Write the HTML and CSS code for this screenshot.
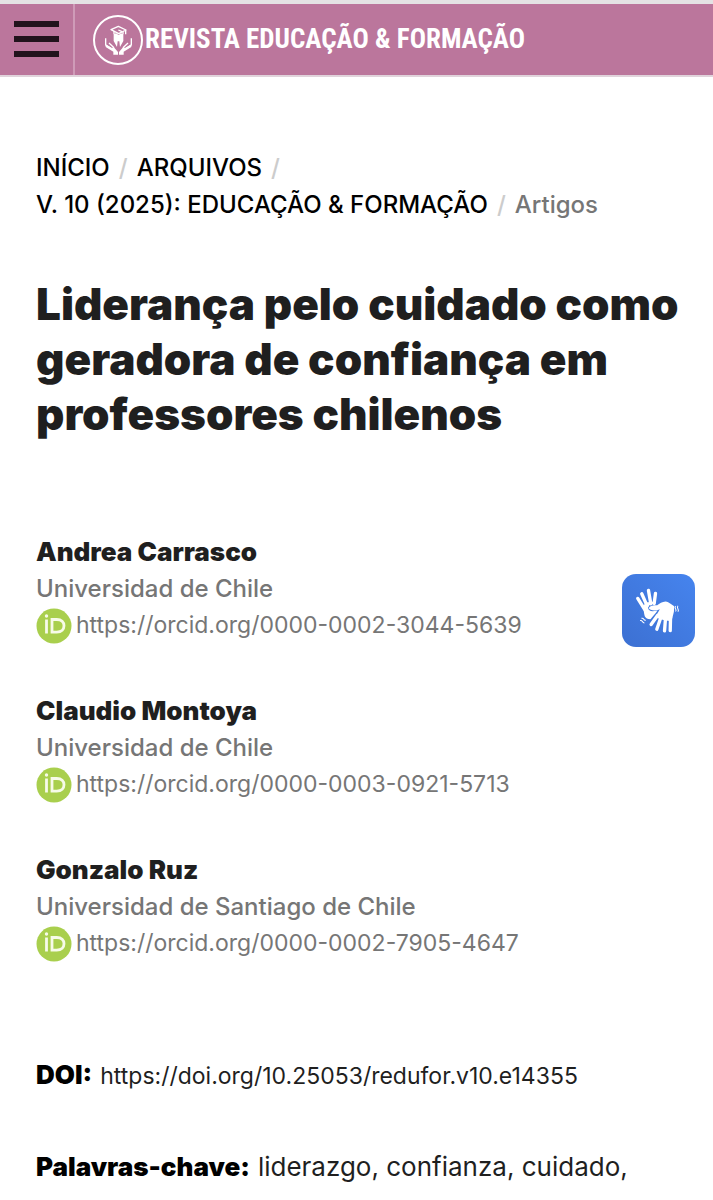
FILE: index.html
```html
<!DOCTYPE html>
<html lang="pt-BR">
<head>
  <meta charset="utf-8">
  <meta name="viewport" content="width=device-width, initial-scale=1">
  <title>Liderança pelo cuidado como geradora de confiança em professores chilenos</title>
  <link rel="stylesheet" href="styles.css">
</head>
<body>

<svg class="defs" width="0" height="0" aria-hidden="true">
  <symbol id="orcid" viewBox="0 0 36 36">
    <circle cx="18" cy="18" r="17.5" fill="#a9cf4d"/>
    <g fill="none" stroke="#f7fbe9" stroke-width="2.8">
      <path d="M10.500 11.500v14"/>
      <path d="M16 11.500h4.800c4.800 0 7.200 2.900 7.200 6.300s-2.400 6.300-7.200 6.300h-4.800z"/>
    </g>
    <circle cx="10.500" cy="8" r="1.700" fill="#f7fbe9"/>
  </symbol>
</svg>

<header class="site-header">
  <button class="menu-btn" aria-label="Menu">
    <span></span>
    <span></span>
    <span></span>
  </button>
  <a class="logo" href="#">
    <svg class="logo-mark" viewBox="0 0 150 154" aria-hidden="true">
      <circle cx="75" cy="77" r="72" fill="none" stroke="#fff" stroke-width="6"/>
      <g fill="none" stroke="#fff" stroke-width="4" stroke-linejoin="round">
        <path d="M54 46l22-10 23 11-22 11z"/>
        <path d="M98 48v12M76 47l11 5M63 50v10M90 52v8"/>
        <path d="M38 72v20l19 12M115 72v20l-19 12"/>
        <path d="M48 86l15 14M105 86l-15 14"/>
      </g>
      <g fill="#fff">
        <path d="M62 60l7-3 8 5 7-5 7 3v20l-10 18-2-17h-5l-2 17-10-18z"/>
        <path d="M38 90l19 11 5-3 13 15v8H61v-9L38 98z"/>
        <path d="M115 90l-19 11-5-3-13 15v8h14v-9l23-14z"/>
      </g>
    </svg>
    <span class="logo-text">REVISTA EDUCAÇÃO &amp; FORMAÇÃO</span>
  </a>
</header>

<main class="article">
  <nav class="breadcrumbs" aria-label="Você está aqui">
    <ol>
      <li><a href="#">INÍCIO</a></li>
      <li><a href="#">ARQUIVOS</a></li>
      <li><a href="#">V. 10 (2025): EDUCAÇÃO &amp; FORMAÇÃO</a></li>
      <li class="current">Artigos</li>
    </ol>
  </nav>

  <h1>Liderança pelo cuidado como geradora de confiança em professores chilenos</h1>

  <ul class="authors">
    <li>
      <strong>Andrea Carrasco</strong>
      <span class="affiliation">Universidad de Chile</span>
      <a class="orcid" href="#"><svg aria-hidden="true"><use href="#orcid"/></svg>https://orcid.org/0000-0002-3044-5639</a>
    </li>
    <li>
      <strong>Claudio Montoya</strong>
      <span class="affiliation">Universidad de Chile</span>
      <a class="orcid" href="#"><svg aria-hidden="true"><use href="#orcid"/></svg>https://orcid.org/0000-0003-0921-5713</a>
    </li>
    <li>
      <strong>Gonzalo Ruz</strong>
      <span class="affiliation">Universidad de Santiago de Chile</span>
      <a class="orcid" href="#"><svg aria-hidden="true"><use href="#orcid"/></svg>https://orcid.org/0000-0002-7905-4647</a>
    </li>
  </ul>

  <section class="item doi">
    <h2>DOI:</h2>
    <a href="#">https://doi.org/10.25053/redufor.v10.e14355</a>
  </section>

  <section class="item keywords">
    <h2>Palavras-chave:</h2>
    <span>liderazgo, confianza, cuidado,</span>
  </section>
</main>

<button class="libras-btn" aria-label="Conteúdo acessível em Libras">
  <svg viewBox="36 42 218 218" aria-hidden="true">
    <g fill="none" stroke="#fff" stroke-width="10" stroke-linecap="round" stroke-linejoin="round">
      <path d="M83 115l20 32M95 101l16 36M115 91l7 40M136 100l-4 30"/>
      <path d="M142 166l-19 27M152 172l-12 35M166 174l-3 38M181 170l-1 41"/>
    </g>
    <path fill="#fff" d="M98 143l8-16 30-3 1 6c-13 0-22 5-23 12 0 8 6 11 14 11l14-2c-3 5-7 10-11 14l-10 12c-9 0-14-3-17-9-3-8-2-16-6-25z"/>
    <path fill="#fff" d="M119 140c5-5 13-5 22-5 7-5 15-10 25-11 6 0 10 4 15 7l11 7-1 17-5 20-5 7-16-1-13-4-17-6 14-24c-9 4-19 5-27 2-6-2-7-6-3-9z"/>
    <path d="M196 138q-3 4 0 8t0 8M203 137q-3 5 0 9t0 9M90 181q5-1 7 3t6 4M94 174q5-1 7 3t6 3" fill="none" stroke="#fff" stroke-width="3"/>
  </svg>
</button>

</body>
</html>
```
FILE: styles.css
```css
* {
  box-sizing: border-box;
}
body {
  margin: 0;
  font-family: Inter, sans-serif;
  font-size: 24px;
  line-height: 37px;
  color: #1f1f1f;
  background: #fff;
}
a {
  color: inherit;
  text-decoration: none;
}
button {
  border: none;
  cursor: pointer;
}
.defs {
  position: absolute;
}

/* Header */
.site-header {
  display: flex;
  height: 77px;
  background: #bb769c;
  border-top: 4px solid #e4e2e4;
  border-bottom: 2px solid #e0d3db;
}
.menu-btn {
  display: flex;
  flex-direction: column;
  justify-content: center;
  gap: 9px;
  width: 75px;
  padding: 0 14px 2px;
  background: none;
  border-right: 2px solid #cf9bb8;
}
.menu-btn span {
  height: 6px;
  background: #21131c;
}
.logo {
  display: flex;
  align-items: center;
  padding-left: 18px;
  color: #fff;
}
.logo-mark {
  width: 50px;
  height: 52px;
}
.logo-text {
  padding-left: 2px;
  font-family: "Roboto Condensed", Roboto, sans-serif;
  font-size: 27px;
  font-weight: bold;
  white-space: nowrap;
}

/* Article */
.article {
  padding: 72px 32px 0 36px;
}
.breadcrumbs ol {
  display: flex;
  flex-wrap: wrap;
  margin: 0;
  padding: 0;
  list-style: none;
  font-weight: 500;
  color: #000;
}
.breadcrumbs li:not(:last-child)::after {
  content: "/";
  padding: 0 9px;
  color: #ccc;
}
.breadcrumbs .current {
  color: #767676;
}
h1 {
  margin: 54px 0 0;
  font-size: 44px;
  line-height: 55px;
  font-weight: 900;
}
.authors {
  display: flex;
  flex-direction: column;
  gap: 48px;
  margin: 91px 0 0;
  padding: 0;
  list-style: none;
  color: #767676;
}
.authors li {
  display: flex;
  flex-direction: column;
}
.authors strong {
  font-size: 26px;
  font-weight: 900;
  color: #1f1f1f;
}
.affiliation {
  font-weight: 500;
}
.orcid {
  display: flex;
  align-items: center;
  gap: 4px;
  font-size: 23px;
}
.orcid svg {
  width: 36px;
  height: 36px;
}
.item {
  display: flex;
  align-items: baseline;
  gap: 8px;
}
.item h2 {
  margin: 0;
  font-size: 26px;
  font-weight: 900;
  color: #000;
}
.doi {
  margin-top: 94px;
}
.doi a {
  font-size: 23px;
}
.keywords {
  margin-top: 53px;
  font-size: 26px;
}

/* Libras widget */
.libras-btn {
  position: fixed;
  top: 574px;
  right: 18px;
  width: 73px;
  height: 73px;
  padding: 0;
  border-radius: 14px;
  background: linear-gradient(45deg, #3c70d2, #4684ee);
}
.libras-btn svg {
  display: block;
  width: 73px;
  height: 73px;
}
```
